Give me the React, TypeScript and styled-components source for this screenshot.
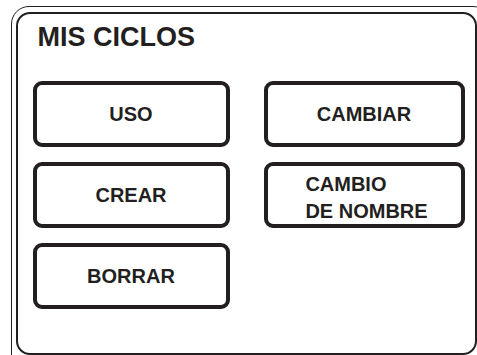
import styled, { createGlobalStyle } from 'styled-components'

const ink = '#231f20'

const GlobalStyle = createGlobalStyle`
  html, body {
    margin: 0;
    padding: 0;
    background: #ffffff;
    overflow: hidden;
  }
  body {
    font-family: "Liberation Sans", Arial, Helvetica, sans-serif;
    color: ${ink};
  }
`

const Viewport = styled.div`
  width: 477px;
  height: 355px;
  overflow: hidden;
`

const OuterFrame = styled.div`
  margin: 6px 0 0 11px;
  width: 480px;
  height: 370px;
  box-sizing: border-box;
  border: 1.5px solid ${ink};
  border-radius: 18px;
  padding: 4.5px 0 0 3.5px;
`

const Panel = styled.section`
  width: 461px;
  height: 343px;
  box-sizing: border-box;
  border: 2px solid ${ink};
  border-radius: 14px;
  padding: 0 0 0 15px;
`

const Title = styled.h1`
  margin: 8px 0 0 5px;
  font-size: 27px;
  line-height: 30px;
  font-weight: 700;
`

const ButtonGrid = styled.div`
  margin-top: 29px;
  display: grid;
  grid-template-columns: 197px 201px;
  grid-auto-rows: 66px;
  column-gap: 34px;
  row-gap: 15px;
`

const MenuButton = styled.button`
  box-sizing: border-box;
  display: flex;
  align-items: center;
  justify-content: center;
  padding: 2px 0 0;
  margin: 0;
  background: #ffffff;
  border: 4px solid ${ink};
  border-radius: 9px;
  font-family: "Liberation Sans", Arial, Helvetica, sans-serif;
  font-size: 20px;
  font-weight: 700;
  color: ${ink};
  cursor: pointer;
`

const TwoLine = styled.span`
  display: inline-block;
  text-align: left;
  line-height: 27px;
  margin: 4px 0 0 5px;
`

export default function App() {
  return (
    <Viewport>
      <GlobalStyle />
      <OuterFrame>
        <Panel>
          <Title>MIS CICLOS</Title>
          <ButtonGrid>
            <MenuButton>USO</MenuButton>
            <MenuButton>CAMBIAR</MenuButton>
            <MenuButton>CREAR</MenuButton>
            <MenuButton>
              <TwoLine>
                CAMBIO
                <br />
                DE NOMBRE
              </TwoLine>
            </MenuButton>
            <MenuButton>BORRAR</MenuButton>
          </ButtonGrid>
        </Panel>
      </OuterFrame>
    </Viewport>
  )
}
